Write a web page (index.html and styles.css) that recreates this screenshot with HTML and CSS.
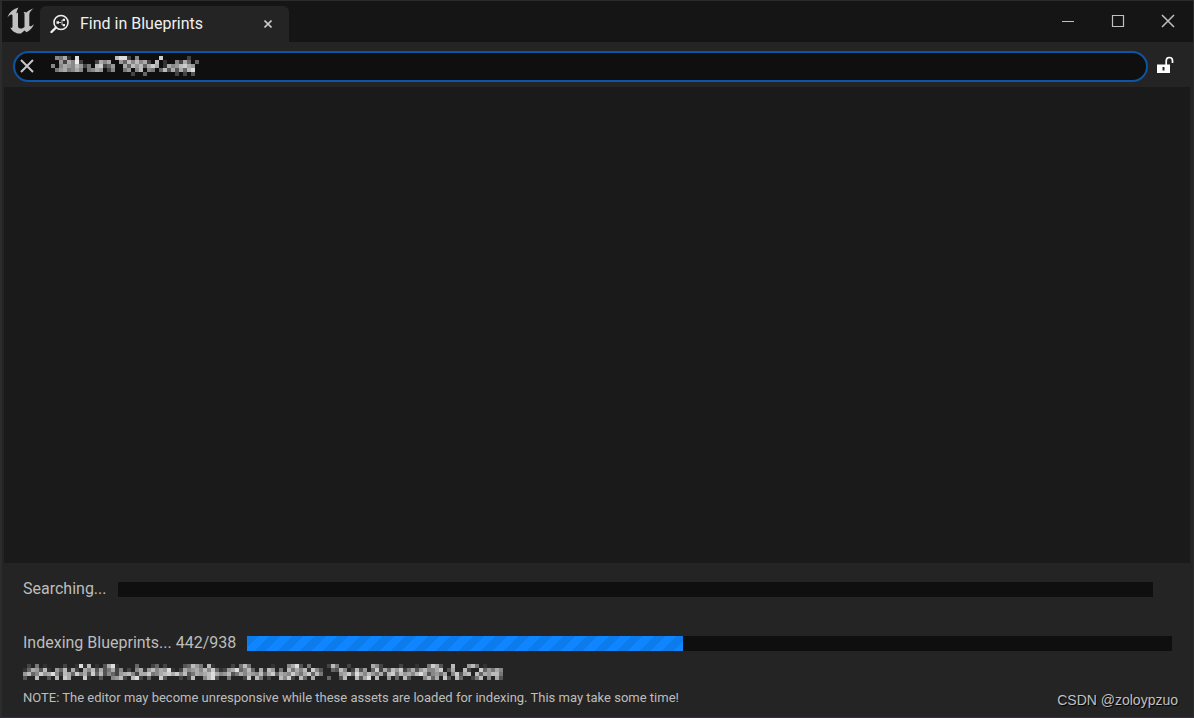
FILE: index.html
```html
<!DOCTYPE html>
<html lang="en">
<head>
<meta charset="utf-8">
<title>Find in Blueprints</title>
<link rel="stylesheet" href="styles.css">
</head>
<body>
<div class="window">
  <header class="titlebar">
    <svg class="logo" viewBox="0 0 28 28" aria-hidden="true"><path d="M11.500 .5C6 2 2 5.500 .5 10.500C2 8.500 3.500 7.300 4.700 7.500C5.400 7.700 5.500 8.300 5.500 9V19.500C5.500 21 4.500 21.300 3.300 20.500C5 24.500 9.500 27 14 26.500L17.500 23.500L19.500 25.300C23 23.500 26 20.500 27 17C25.500 18.500 24 19.500 22.900 19.300C22.400 19.100 22.300 18.500 22.300 17.500V7.500C22.300 5 24.500 3 26.500 1.500C23.500 2.300 21 4 19.500 5.500C18.500 4.700 17.500 4.800 16.500 5.200C17.400 5.900 17.500 6.500 17.500 7.500V20C16.500 21 15 21.700 13.500 21.500C11.500 21.200 11 20.500 11 18.500V5.500C10.500 5.700 9.800 6 9.300 6.500C9.700 4.500 10.500 2 11.500 .5Z" fill="currentColor"/></svg>
    <div class="tab">
      <svg class="tab-icon" viewBox="0 0 20 20" aria-hidden="true"><circle cx="11" cy="8.500" r="7" fill="none" stroke="currentColor" stroke-width="1.600"/><path d="M6 13.500L1.500 18" stroke="currentColor" stroke-width="2.400" stroke-linecap="round"/><path d="M8 8.500H11M14 6H12V11H14" fill="none" stroke="currentColor" stroke-width=".8"/><path d="M6.500 7.300h2.500v2.500h-2.500zM13 4.800h2v2.200H13zM13 10h2v2.200H13z" fill="currentColor"/></svg>
      <span class="tab-title">Find in Blueprints</span>
      <button class="tab-close" type="button" aria-label="Close tab"><svg viewBox="0 0 8 8"><path d="M.5 .5L7.500 7.500M7.500 .5L.5 7.500" stroke="currentColor" stroke-width="1.600"/></svg></button>
    </div>
    <div class="window-buttons">
      <button type="button" aria-label="Minimize"><svg viewBox="0 0 14 14"><path d="M1 7.500H13" stroke="currentColor"/></svg></button>
      <button type="button" aria-label="Maximize"><svg viewBox="0 0 14 14"><path d="M1.500 1.500H12.500V12.500H1.500Z" fill="none" stroke="currentColor" stroke-width="1.200"/></svg></button>
      <button type="button" aria-label="Close"><svg viewBox="0 0 14 14"><path d="M1 1L13 13M13 1L1 13" stroke="currentColor" stroke-width="1.500"/></svg></button>
    </div>
  </header>

  <div class="search-row">
    <div class="search-box">
      <button class="clear" type="button" aria-label="Clear search"><svg viewBox="0 0 14 14"><path d="M1 1L13 13M13 1L1 13" stroke="currentColor" stroke-width="2"/></svg></button>
      <div class="field">
        <input class="search-input" type="text" aria-label="Search">
        <svg class="mosaic mosaic-search" data-mosaic="search" aria-hidden="true"></svg>
      </div>
    </div>
    <button class="lock" type="button" aria-label="Lock results"><svg viewBox="0 0 18 18"><path fill-rule="evenodd" d="M1 8.500H14V17H1ZM6.500 11V14.500H8.500V11Z" fill="currentColor"/><path d="M10.200 9V5Q10.200 1.500 13.200 1.500Q16.500 1.500 16.500 4.500V7" fill="none" stroke="currentColor" stroke-width="1.700"/></svg></button>
  </div>

  <main class="results"></main>

  <footer class="status">
    <div class="status-row searching">
      <label for="search-progress">Searching...</label>
      <progress id="search-progress" max="100" value="0"></progress>
    </div>
    <div class="status-row indexing">
      <label for="index-progress">Indexing Blueprints... 442/938</label>
      <progress id="index-progress" max="938" value="442"></progress>
    </div>
    <svg class="mosaic mosaic-asset" data-mosaic="asset" aria-hidden="true"></svg>
    <div class="note-row">
      <p class="note">NOTE: The editor may become unresponsive while these assets are loaded for indexing. This may take some time!</p>
      <span class="watermark">CSDN @zoloypzuo</span>
    </div>
  </footer>
</div>
<script src="mosaic.js"></script>
</body>
</html>
```

FILE: styles.css
```css
* {
  box-sizing: border-box;
}

body {
  margin: 0;
  background: #242424;
  color: #bdbdbd;
  font: 16px/20px Roboto, "Noto Sans", sans-serif;
}

button {
  display: flex;
  align-items: center;
  justify-content: center;
  padding: 0;
  border: 0;
  background: none;
  color: inherit;
}

svg {
  display: block;
}

.window {
  display: flex;
  flex-direction: column;
  min-height: 100vh;
  border: solid #2c2c2c;
  border-width: 1px 2px;
  border-right-width: 1px;
  border-bottom-color: #37303a;
}

.titlebar {
  display: flex;
  height: 41px;
  background: #151515;
}

.logo {
  width: 28px;
  height: 28px;
  margin: 6px 5px 0;
  color: #c0c0c0;
}

.tab {
  display: flex;
  align-items: center;
  width: 249px;
  margin-top: 5px;
  padding: 0 16px 0 10px;
  border-radius: 6px 6px 0 0;
  background: #242424;
  color: #f0f0f0;
}

.tab-icon {
  width: 20px;
  height: 20px;
  margin-right: 10px;
}

.tab-title {
  flex: 1;
}

.tab-close {
  width: 10px;
  height: 16px;
  color: #c8c8c8;
}

.tab-close svg {
  width: 8px;
  height: 8px;
}

.window-buttons {
  display: flex;
  margin-left: auto;
  color: #c0c0c0;
}

.window-buttons button {
  width: 50px;
  height: 39px;
}

.window-buttons svg {
  width: 14px;
  height: 14px;
}

.search-row {
  display: flex;
  align-items: center;
  gap: 7px;
  padding: 9px 18px 5px 11px;
}

.search-box {
  display: flex;
  flex: 1;
  align-items: center;
  height: 31px;
  padding: 0 16px 2px 5px;
  border: 2px solid #0a55a8;
  border-radius: 16px;
  background: #0f0f0f;
}

.clear {
  width: 14px;
  height: 16px;
  color: #c8c8c8;
}

.clear svg {
  width: 14px;
  height: 14px;
}

.field {
  position: relative;
  flex: 1;
  margin-left: 17px;
}

.search-input {
  display: block;
  width: 100%;
  height: 24px;
  padding: 0;
  border: 0;
  outline: 0;
  background: none;
  color: #c8c8c8;
  font: inherit;
}

.mosaic-search {
  position: absolute;
  left: 0;
  top: 2px;
  pointer-events: none;
}

.lock {
  width: 20px;
  height: 24px;
  padding-bottom: 4px;
  color: #ffffff;
}

.lock svg {
  width: 18px;
  height: 18px;
}

.results {
  flex: 1;
  margin: 0 3px 0 2px;
  background: #1a1a1a;
}

.status {
  padding: 16px 21px 6px;
}

.status-row {
  display: flex;
  align-items: center;
  gap: 11px;
}

.searching {
  padding-right: 19px;
}

.indexing {
  margin-top: 34px;
}

progress {
  flex: 1;
  min-width: 0;
  height: 15px;
  border: 0;
  background: #0f0f0f;
  appearance: none;
}

progress::-webkit-progress-bar {
  background: #0f0f0f;
}

progress::-webkit-progress-value {
  background: repeating-linear-gradient(135deg, #0c7bec 0 8px, #0f86ff 8px 16px);
}

.mosaic-asset {
  margin-top: 11px;
}

.note-row {
  display: flex;
  align-items: flex-start;
  justify-content: space-between;
  margin-top: 9px;
}

.note {
  margin: 0;
  font-size: 13px;
  line-height: 18px;
}

.watermark {
  margin: 1px -6px 1px 0;
  color: #c0c0c0;
  font: 14px/20px "Liberation Sans", Arial, sans-serif;
  text-shadow: 1px 1px 1px #000000;
}
```

FILE: mosaic.js
```javascript
// Each row is a string of hex brightness digits; "." leaves a cell empty.
const mosaics = {
  search: {
    width: 4,
    height: 4,
    rows: [
      ".87a3.d.........bdd4.8.....c......4..",
      "..94a8e4...4a8a..96b8b8a4.b.3..84a6.6",
      "8.8a98b947.bc469..a6b9b6aca.3a89bca9.",
      ".79a78a8.78a9.48..79.8b.87.6b5a5a6bd.",
      "....................4..6.......4.4.5."
    ]
  },
  asset: {
    width: 4,
    height: 4,
    rows: [
      ".4.7.3....4..3d3b.3.5ad3....6...46.4....56b97.b3....4.7b7.....3...8ad5.7....4b7..4.....a84....4...3..7ca5..b...9b7.3....",
      "36a95b3.96b3a4.a8b5a57a48.4.8a39b8a9d3.4a89a8b8c6349ad68b6.a3b9.7.b7a8b3c85..65b8.4b59.6c4a6b9c47a59b88ac.5a..b4..c697a8",
      "9b68c9ad84ba6c8a5c6b58649ab84aac78abcac8b57a9abda89b57a8a98b6ac6a98c97ac6b7....9ac7da8b97a4bc7b9a8bda5897a.8c5ab.b6a9bb7",
      "5..b..5.b.ca...c3..5..89b4.bd4.6..c5...4.4b..8bd5..7...4c.b7.4..b8c4.b6.a...6..5b..b5ad.b..9.6.b5...8b6a.c5.b6..47b.8.a5"
    ]
  }
};

document.querySelectorAll("[data-mosaic]").forEach((svg) => {
  const { width, height, rows } = mosaics[svg.dataset.mosaic];
  svg.setAttribute("width", rows[0].length * width);
  svg.setAttribute("height", rows.length * height);
  rows.forEach((row, y) => {
    [...row].forEach((digit, x) => {
      if (digit === ".") return;
      const cell = document.createElementNS("http://www.w3.org/2000/svg", "rect");
      cell.setAttribute("x", x * width);
      cell.setAttribute("y", y * height);
      cell.setAttribute("width", width);
      cell.setAttribute("height", height);
      cell.setAttribute("fill", `#${digit.repeat(3)}`);
      svg.append(cell);
    });
  });
});
```
